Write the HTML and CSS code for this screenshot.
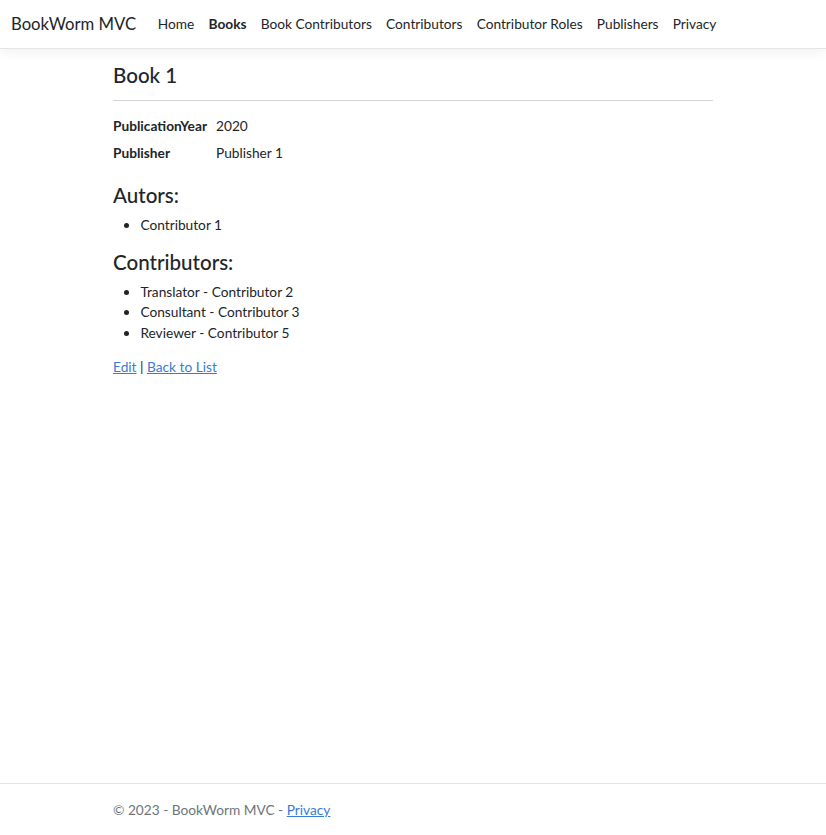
FILE: index.html
```html
<!DOCTYPE html>
<html lang="en">
<head>
<meta charset="utf-8">
<title>Book 1 - BookWorm MVC</title>
<link rel="stylesheet" href="styles.css">
</head>
<body>
<div class="page">
  <header class="navbar">
    <a class="brand" href="#">BookWorm MVC</a>
    <nav class="nav">
      <a class="nav-link" href="#">Home</a>
      <a class="nav-link active" href="#">Books</a>
      <a class="nav-link" href="#">Book Contributors</a>
      <a class="nav-link" href="#">Contributors</a>
      <a class="nav-link" href="#">Contributor Roles</a>
      <a class="nav-link" href="#">Publishers</a>
      <a class="nav-link" href="#">Privacy</a>
    </nav>
  </header>
  <main class="main">
    <div class="container">
      <h4 class="heading">Book 1</h4>
      <hr class="rule">
      <dl class="details">
        <div class="detail-row">
          <dt class="detail-term">PublicationYear</dt>
          <dd class="detail-value">2020</dd>
        </div>
        <div class="detail-row">
          <dt class="detail-term">Publisher</dt>
          <dd class="detail-value">Publisher 1</dd>
        </div>
      </dl>
      <h4 class="heading">Autors:</h4>
      <ul class="list">
        <li>Contributor 1</li>
      </ul>
      <h4 class="heading">Contributors:</h4>
      <ul class="list">
        <li>Translator - Contributor 2</li>
        <li>Consultant - Contributor 3</li>
        <li>Reviewer - Contributor 5</li>
      </ul>
      <div class="actions">
        <a class="link" href="#">Edit</a> | <a class="link" href="#">Back to List</a>
      </div>
    </div>
  </main>
  <footer class="footer">
    <div class="container">&copy; 2023 - BookWorm MVC - <a class="link" href="#">Privacy</a></div>
  </footer>
</div>
</body>
</html>
```
FILE: styles.css
```css
* { box-sizing: border-box; }
html, body { margin: 0; padding: 0; }
body {
  font-family: Lato, "Liberation Sans", Arial, sans-serif;
  font-size: 13.71px;
  line-height: 1.5;
  color: #212529;
  background: #fff;
}
.page {
  display: flex;
  flex-direction: column;
  min-height: 100vh;
}
.navbar {
  display: flex;
  align-items: center;
  height: 49px;
  padding: 1px 11px 0;
  border-bottom: 1px solid #e5e5e5;
  box-shadow: 0 4px 10px rgba(0, 0, 0, 0.05);
  background: #fff;
  position: relative;
  z-index: 1;
}
.brand {
  font-size: 16.7px;
  color: #212529;
  text-decoration: none;
  margin-right: 14.5px;
  white-space: nowrap;
}
.nav { display: flex; }
.nav-link {
  padding: 0 7.1px;
  color: #212529;
  text-decoration: none;
  white-space: nowrap;
}
.nav-link.active { font-weight: 700; }
.main { flex: 1; }
.container {
  width: 600px;
  margin: 0 auto;
}
.heading {
  font-size: 20.57px;
  line-height: 1.2;
  font-weight: 500;
  margin: 0 0 7.4px;
}
.main .container > .heading:first-child { margin-top: 14px; }
.rule {
  border: 0;
  border-top: 1px solid #d3d4d5;
  margin: 12.5px 0 14.7px;
  height: 0;
}
.details { margin: 0 0 13.7px; }
.detail-row { display: flex; }
.detail-term {
  width: 103px;
  flex: none;
  font-weight: 700;
  white-space: nowrap;
}
.detail-value { margin: 0 0 6.4px; }
.list {
  margin: 0 0 13.7px;
  padding-left: 27.4px;
}
.link { color: #3a7bd5; text-decoration: underline; }
.footer {
  border-top: 1px solid #e5e5e5;
  line-height: 51px;
  color: #6c757d;
}
```
